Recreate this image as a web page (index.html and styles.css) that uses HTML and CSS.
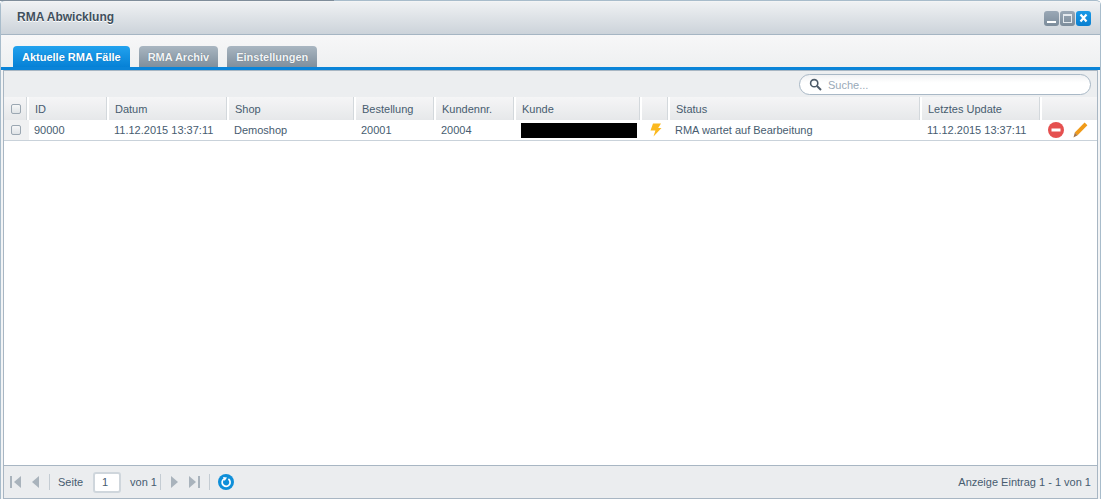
FILE: index.html
```html
<!DOCTYPE html>
<html lang="de">
<head>
<meta charset="utf-8">
<title>RMA Abwicklung</title>
<link rel="stylesheet" href="styles.css">
</head>
<body>
<div class="topline"></div>
<div class="window">
  <header class="titlebar">
    <h1 class="title">RMA Abwicklung</h1>
    <div class="winbtns">
      <span class="winbtn"><svg width="15" height="15" viewBox="0 0 15 15"><rect x="3" y="10" width="9" height="2" fill="#fff"/></svg></span>
      <span class="winbtn"><svg width="15" height="15" viewBox="0 0 15 15"><rect x="3.5" y="3.5" width="8" height="8" fill="none" stroke="#e4e9ee" stroke-width="1"/><rect x="3" y="3" width="9" height="2" fill="#e4e9ee"/></svg></span>
      <span class="winbtn close"><svg width="15" height="15" viewBox="0 0 15 15"><path d="M4.5 3.5L10.5 10.5M10.5 3.5L4.5 10.5" stroke="#fff" stroke-width="2.2"/></svg></span>
    </div>
  </header>
  <nav class="tabs">
    <span class="tab active">Aktuelle RMA Fälle</span>
    <span class="tab">RMA Archiv</span>
    <span class="tab">Einstellungen</span>
  </nav>
  <main class="panel">
    <div class="toolbar">
      <div class="search">
        <svg class="search-icon" width="13" height="13" viewBox="0 0 13 13"><circle cx="5.2" cy="5.2" r="3.6" fill="none" stroke="#4c5a68" stroke-width="1.6"/><path d="M8 8L12 12" stroke="#4c5a68" stroke-width="2"/></svg>
        <span class="placeholder">Suche...</span>
      </div>
    </div>
    <div class="grid-row head">
      <div class="cell check"><span class="cb"></span></div>
      <div class="cell">ID</div>
      <div class="cell">Datum</div>
      <div class="cell">Shop</div>
      <div class="cell">Bestellung</div>
      <div class="cell">Kundennr.</div>
      <div class="cell">Kunde</div>
      <div class="cell"></div>
      <div class="cell">Status</div>
      <div class="cell">Letztes Update</div>
      <div class="cell last"></div>
    </div>
    <div class="grid-row data">
      <div class="cell check"><span class="cb"></span></div>
      <div class="cell">90000</div>
      <div class="cell">11.12.2015 13:37:11</div>
      <div class="cell">Demoshop</div>
      <div class="cell">20001</div>
      <div class="cell">20004</div>
      <div class="cell redact-cell"><span class="redact"></span></div>
      <div class="cell icon-cell"><svg width="13" height="14" viewBox="0 0 13 14"><path d="M4 0.5H12L9.2 5H12.5L4.5 13.5L6.4 7.5H1.5Z" fill="#fbb91f"/></svg></div>
      <div class="cell">RMA wartet auf Bearbeitung</div>
      <div class="cell">11.12.2015 13:37:11</div>
      <div class="cell actions">
        <svg width="16" height="16" viewBox="0 0 16 16"><circle cx="8" cy="8" r="8" fill="#e5504f"/><rect x="3.5" y="6.5" width="9" height="3" fill="#fff"/></svg>
        <svg width="15" height="16" viewBox="0 0 15 16"><path d="M11.6 0.6L14.4 3.2L4.6 13.2L1.8 10.6Z" fill="#f09a18"/><path d="M1.8 10.6L4.6 13.2L0.5 15.5Z" fill="#a5764a"/></svg>
      </div>
    </div>
    <div class="grid-body"></div>
    <footer class="pager">
      <div class="pager-left">
        <svg class="pg" width="14" height="14" viewBox="0 0 14 14"><rect x="1" y="1" width="2" height="12" fill="#a9b3bc"/><path d="M12 1V13L5 7Z" fill="#a9b3bc"/></svg>
        <svg class="pg second" width="10" height="14" viewBox="0 0 10 14"><path d="M8 1V13L1 7Z" fill="#a9b3bc"/></svg>
        <span class="sep"></span>
        <span class="ptext">Seite</span>
        <span class="pageinput">1</span>
        <span class="ptext">von 1</span>
        <span class="sep"></span>
        <svg class="pg" width="10" height="14" viewBox="0 0 10 14"><path d="M2 1V13L9 7Z" fill="#a9b3bc"/></svg>
        <svg class="pg second" width="14" height="14" viewBox="0 0 14 14"><path d="M2 1V13L9 7Z" fill="#a9b3bc"/><rect x="11" y="1" width="2" height="12" fill="#a9b3bc"/></svg>
        <span class="sep"></span>
        <svg class="refresh" width="16" height="16" viewBox="0 0 16 16"><circle cx="8" cy="8" r="8" fill="#0f8fd9"/><path d="M6 4.9A4 4 0 1 0 10.4 5" fill="none" stroke="#fff" stroke-width="1.7"/><path d="M5 3L9 3.6L6.6 7Z" fill="#fff"/></svg>
      </div>
      <span class="ptext">Anzeige Eintrag 1 - 1 von 1</span>
    </footer>
  </main>
</div>
</body>
</html>
```
FILE: styles.css
```css
* { box-sizing: border-box; }
html, body { margin: 0; padding: 0; width: 1101px; height: 499px; overflow: hidden; background: #fff; }
body { font-family: "Liberation Sans", Arial, sans-serif; font-size: 11px; color: #475c6f; position: relative; }
.topline { position: absolute; left: 0; top: 0; width: 334px; height: 1px; background: #7f8d9a; z-index: 2; }
.window { height: 499px; display: flex; flex-direction: column; border: 1px solid #a8bccb; border-bottom: 0; border-radius: 5px 5px 0 0; background: #f3f4f5; }
.titlebar { height: 33px; margin-top: 1px; flex: none; display: flex; align-items: center; justify-content: space-between; padding: 0 9px 0 16px; background: linear-gradient(#eff1f3, #ccd3da); border-bottom: 1px solid #a5b5c3; }
.title { margin: 0; font-size: 12px; font-weight: bold; color: #3f4f5d; text-shadow: 0 1px 0 #fff; padding-bottom: 2px; }
.winbtns { display: flex; gap: 1px; margin-top: 1px; }
.winbtn { width: 15px; height: 15px; border-radius: 3px; background: linear-gradient(#9aa8b6, #7c8c9b); display: block; }
.winbtn svg { display: block; }
.winbtn.close { background: linear-gradient(#1a9ae8, #0a7fd0); }
.tabs { height: 32px; flex: none; display: flex; align-items: flex-end; gap: 9px; padding-left: 12px; background: linear-gradient(#f7f7f8, #eef0f1); border-bottom: 3px solid #0a84d8; height: 35px; }
.tab { height: 21px; padding: 0 9px; display: flex; align-items: center; border-radius: 4px 4px 0 0; font-weight: bold; font-size: 11px; color: #f3f5f7; background: linear-gradient(#a9b6c1, #7f8f9d); text-shadow: 0 0 1px #5b6a78; }
.tab.active { background: linear-gradient(#22a2ee, #0681d6); color: #fff; text-shadow: 0 0 1px #056cb3; }
.panel { flex: 1; min-height: 0; display: flex; flex-direction: column; margin: 0 2px 0 2px; border: 1px solid #a8b6c3; border-top: 1px solid #a8b6c3; border-left-width: 1px; background: #fff; }
.toolbar { height: 26px; flex: none; display: flex; justify-content: flex-end; align-items: flex-start; padding: 3px 6px 0 0; background: #eceef0; }
.search { width: 292px; height: 21px; display: flex; align-items: center; gap: 6px; padding-left: 9px; border: 1px solid #a9b8c6; border-radius: 11px; background: linear-gradient(#f0f1f3, #fff 40%); }
.search-icon { flex: none; }
.placeholder { color: #99a9b8; font-size: 11px; }
.grid-row { display: grid; grid-template-columns: 25px 80px 120px 127px 80px 80px 126px 28px 252px 120px 1fr; flex: none; }
.head { height: 23px; background: linear-gradient(#f5f5f6, #e6e8ea); }
.head .cell { border-right: 2px solid #fff; box-shadow: inset -1px 0 0 #d3d8dc; padding-left: 6px; display: flex; align-items: center; }
.head .cell.last { border-right: 0; box-shadow: none; }
.data { height: 21px; border-bottom: 1px solid #c9d2da; background: #fff; }
.data .cell { padding-left: 5px; display: flex; align-items: center; white-space: nowrap; }
.cell.check { padding-left: 7px !important; }
.data .cell.check { background: #f0f1f2; }
.cb { display: block; width: 10px; height: 10px; border: 1px solid #9ba7b2; border-radius: 2px; background: linear-gradient(#f6f7f8, #dfe3e6); }
.data .redact-cell { padding-left: 5px; }
.redact { display: block; width: 116px; height: 15px; background: #000; }
.data .icon-cell { padding-left: 7px; }
.data .actions { padding-left: 6px; gap: 9px; }
.actions svg, .icon-cell svg { display: block; flex: none; }
.grid-body { flex: 1; background: #fff; border-bottom: 1px solid #a8b6c3; min-height: 0; }
.pager { height: 32px; flex: none; display: flex; align-items: center; justify-content: space-between; padding: 0 6px 0 5px; background: #ebedef; }
.pager-left { display: flex; align-items: center; }
.pg { display: block; flex: none; margin-right: 8px; }
.pg.second { margin-right: 5px; }
.sep { width: 1px; height: 16px; background: #c4ccd3; margin: 0 8px 0 3px; }
.ptext { color: #475c6f; }
.pageinput { width: 28px; height: 21px; margin: 0 9px 0 10px; border: 2px solid #cfd6dc; border-radius: 3px; background: #fff; display: flex; align-items: center; padding-left: 7px; }
.refresh { display: block; flex: none; }
```
